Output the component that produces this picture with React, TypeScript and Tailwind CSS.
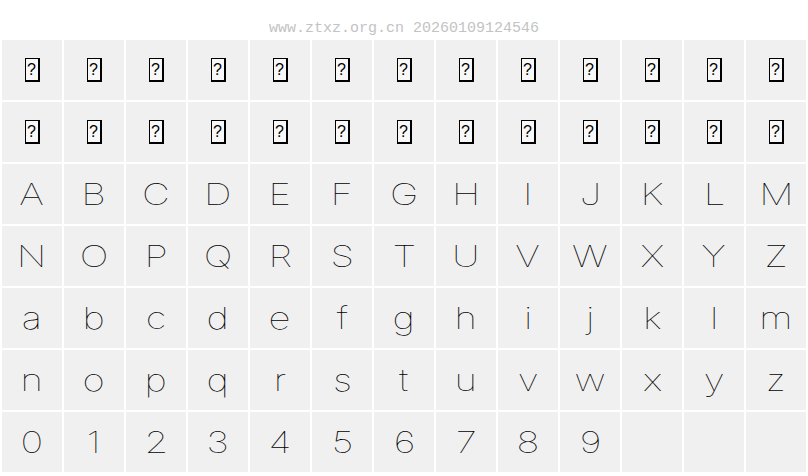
import React from 'react';

const upper = 'ABCDEFGHIJKLMNOPQRSTUVWXYZ'.split('');
const lower = 'abcdefghijklmnopqrstuvwxyz'.split('');
const digits = '0123456789'.split('');

// Missing glyph box, as the browser draws it
const Tofu: React.FC = () => (
  <span className="inline-flex w-[15px] h-[24px] items-center justify-center border border-black border-r-2 border-b-2 bg-[#f8f8f8] text-[16px] leading-none text-black font-['Liberation_Sans',sans-serif]">
    ?
  </span>
);

const Cell: React.FC<{ ch?: string; tofu?: boolean }> = ({ ch, tofu }) => (
  <div className="bg-[#f0f0f0] flex items-center justify-center">
    {tofu && <Tofu />}
    {ch && (
      <span className="inline-block scale-x-[1.28] text-[30px] leading-none font-thin text-black font-['Inter','Roboto',sans-serif]">
        {ch}
      </span>
    )}
  </div>
);

export default function App() {
  const cells: { ch?: string; tofu?: boolean }[] = [
    ...Array.from({ length: 26 }, () => ({ tofu: true })),
    ...upper.map(ch => ({ ch })),
    ...lower.map(ch => ({ ch })),
    ...digits.map(ch => ({ ch })),
    {}, {}, {},
  ];

  return (
    <div className="w-[808px] h-[476px] bg-white overflow-hidden">
      {/* Header */}
      <div className="h-[40px] pt-[20px] text-center text-[15px] leading-[17px] text-[#c3c3c3] font-['Liberation_Mono',monospace]">
        www.ztxz.org.cn 20260109124546
      </div>

      {/* Glyph grid */}
      <div className="grid grid-cols-[repeat(13,60px)] auto-rows-[60px] gap-[2px] px-[2px]">
        {cells.map((c, i) => (
          <Cell key={i} ch={c.ch} tofu={c.tofu} />
        ))}
      </div>
    </div>
  );
}
